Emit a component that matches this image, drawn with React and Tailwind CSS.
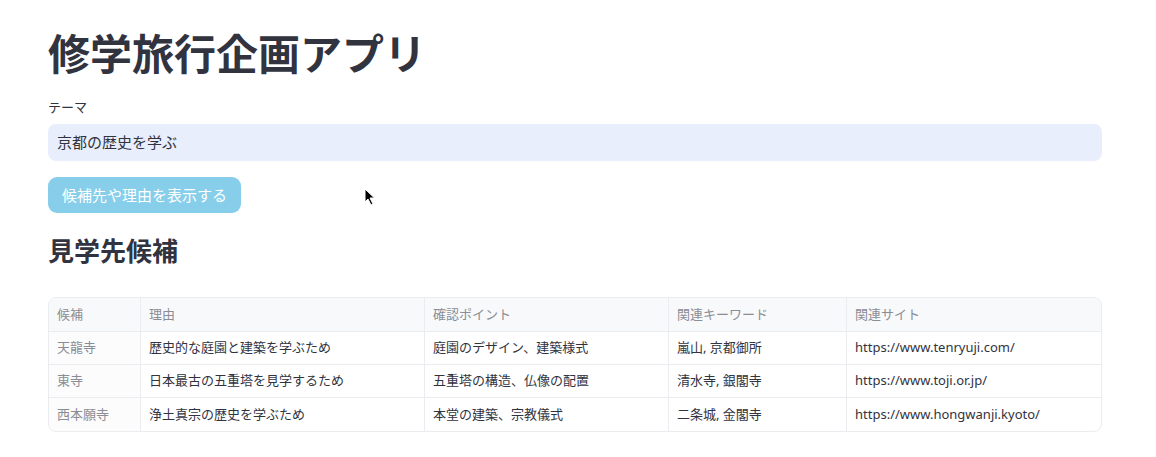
import React from 'react';

const rows = [
  ['天龍寺', '歴史的な庭園と建築を学ぶため', '庭園のデザイン、建築様式', '嵐山, 京都御所', 'https://www.tenryuji.com/'],
  ['東寺', '日本最古の五重塔を見学するため', '五重塔の構造、仏像の配置', '清水寺, 銀閣寺', 'https://www.toji.or.jp/'],
  ['西本願寺', '浄土真宗の歴史を学ぶため', '本堂の建築、宗教儀式', '二条城, 金閣寺', 'https://www.hongwanji.kyoto/'],
];

const headers = ['候補', '理由', '確認ポイント', '関連キーワード', '関連サイト'];
const widths = ['w-[92px]', 'w-[284px]', 'w-[244px]', 'w-[178px]', 'flex-1'];

const App = () => {
  return (
    <div
      className="relative min-h-[457px] bg-white text-[#31333f] px-[48px] pt-[26px]"
      style={{ fontFamily: '"Noto Sans", "Noto Sans CJK JP", sans-serif' }}
    >
      <h1 className="text-[42px] font-bold leading-[56px]">修学旅行企画アプリ</h1>

      <div className="mt-[15px] text-[13px] leading-[20px]">テーマ</div>
      <div className="mt-[7px] h-[37px] w-[1054px] rounded-[8px] bg-[#e8eefb] flex items-center px-[9px] text-[15px]">
        京都の歴史を学ぶ
      </div>

      <button className="mt-[16px] h-[36px] px-[14px] rounded-[9px] bg-[#87ceea] text-white text-[15px]">
        候補先や理由を表示する
      </button>

      <h2 className="mt-[19px] text-[26px] font-bold leading-[38px]">見学先候補</h2>

      <div className="mt-[27px] w-[1054px] rounded-[8px] border border-[#ebecef] overflow-hidden text-[13px]">
        <div className="flex h-[34px] bg-[#f8f9fb] text-[#8b8d95] border-b border-[#ebecef]">
          {headers.map((h, i) => (
            <div
              key={h}
              className={`${widths[i]} flex items-center px-[8px] ${i < 4 ? 'border-r border-[#ebecef]' : ''}`}
            >
              {h}
            </div>
          ))}
        </div>
        {rows.map((r, ri) => (
          <div key={ri} className={`flex h-[33px] ${ri < 2 ? 'border-b border-[#ebecef]' : ''}`}>
            {r.map((c, i) => (
              <div
                key={i}
                className={`${widths[i]} flex items-center px-[8px] ${i < 4 ? 'border-r border-[#ebecef]' : ''} ${i === 0 ? 'text-[#8b8d95] bg-[#fcfcfd]' : ''}`}
              >
                {c}
              </div>
            ))}
          </div>
        ))}
      </div>

      <svg className="absolute left-[364px] top-[188px]" width="12" height="18" viewBox="0 0 12 18">
        <path d="M1 1 L1 14 L4 11 L7 17 L9 16 L6 10 L10.5 10 Z" fill="#000" stroke="#fff" strokeWidth="1" />
      </svg>
    </div>
  );
};

export default App;
